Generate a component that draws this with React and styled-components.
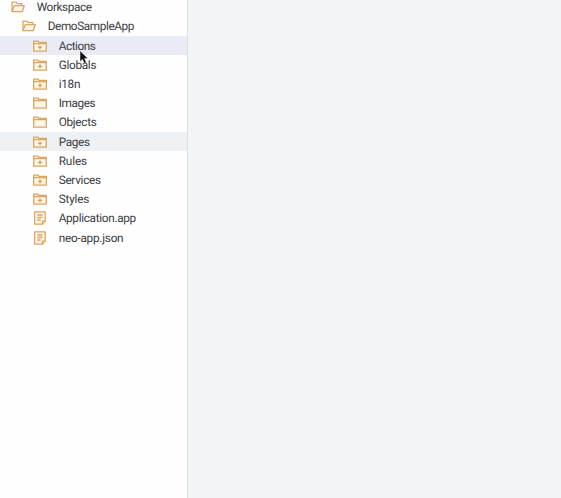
import React from "react";
import styled, { createGlobalStyle } from "styled-components";

const GlobalStyle = createGlobalStyle`
  html, body { margin: 0; height: 100%; overflow: hidden; }
  * { box-sizing: border-box; }
`;
const Shell = styled.div`
  display: flex;
  width: 561px;
  height: 498px;
  background: #f1f5f5;
  font-family: Roboto, "Open Sans", sans-serif;
  text-rendering: geometricPrecision;
`;
const Sidebar = styled.nav`
  position: relative;
  width: 188px;
  height: 100%;
  overflow: hidden;
  background: #fefefe;
  border-right: 1px solid #dbe0e5;
`;
const Canvas = styled.main`
  flex: 1;
`;
const Tree = styled.ul`
  list-style: none;
  margin: -2.3px 0 0;
  padding: 0;
`;
const Row = styled.li`
  display: flex;
  align-items: center;
  height: 19.2px;
  padding-left: ${(p) => p.$indent}px;
  background: ${(p) => p.$fill || "transparent"};
`;
const Icon = styled.svg`
  flex: none;
  width: 14px;
  height: 14px;
  margin-right: 11.7px;
  fill: #fdf5e9;
  stroke: #dba65f;
  stroke-width: 1.3;
  stroke-linejoin: round;
`;
const Label = styled.span`
  font-size: 11.8px;
  line-height: 20px;
  color: #3b3d3f;
  white-space: nowrap;
  letter-spacing: ${(p) => p.$spacing}px;
`;
const Pointer = styled.svg`
  position: absolute;
  left: 79px;
  top: 50px;
  width: 10px;
  height: 14px;
`;

function TreeIcon({ kind }) {
  if (kind === "open")
    return (
      <Icon viewBox="0 0 14 14">
        <path d="M1 11.6V2.2h4l1.1 1.4h4.7v2.1" fill="none" />
        <path d="M1 11.7 3.3 5.7h9.9l-2 6z" />
      </Icon>
    );
  if (kind === "file")
    return (
      <Icon viewBox="0 0 14 14">
        <path d="M1.6 .8h10.6v9.4L9.4 13.2H1.6z" />
        <path d="M9.4 13v-2.8h2.6M4.2 4h5.4M4.2 6.5h5.4M4.2 9h3.5" />
      </Icon>
    );
  return (
    <Icon viewBox="0 0 14 14">
      <path d="M.7 12.2V2.1h4.4l1 1.4h7.2v8.7z" />
      <path d="M.7 4.6h12.6" />
      {kind === "plus" && <path d="M7 6.2v4.2M4.9 8.3h4.2" />}
    </Icon>
  );
}

const items = [
  { name: "Workspace", kind: "open", indent: 11, spacing: -0.4 },
  { name: "DemoSampleApp", kind: "open", indent: 22, spacing: -0.4 },
  { name: "Actions", kind: "plus", fill: "#e9ecf4", spacing: -0.45 },
  { name: "Globals", kind: "plus", spacing: -0.3 },
  { name: "i18n", kind: "plus", spacing: -0.3 },
  { name: "Images", kind: "folder", spacing: -0.4 },
  { name: "Objects", kind: "folder", spacing: -0.3 },
  { name: "Pages", kind: "plus", fill: "#edf1f4", spacing: -0.35 },
  { name: "Rules", kind: "plus", spacing: -0.15 },
  { name: "Services", kind: "plus", spacing: -0.3 },
  { name: "Styles", kind: "plus", spacing: -0.2 },
  { name: "Application.app", kind: "file", spacing: -0.32 },
  { name: "neo-app.json", kind: "file", spacing: -0.25 },
];

export default function App() {
  return (
    <Shell>
      <GlobalStyle />
      <Sidebar>
        <Tree>
          {items.map((item) => (
            <Row key={item.name} $indent={item.indent ?? 33} $fill={item.fill}>
              <TreeIcon kind={item.kind} />
              <Label $spacing={item.spacing}>{item.name}</Label>
            </Row>
          ))}
        </Tree>
        <Pointer viewBox="0 0 10 14">
          <path d="M1 .7v11l2.5-2.2 1.8 4 2.1-.9-1.8-4H9z" fill="#111" stroke="#f4f4f6" strokeWidth=".5" />
        </Pointer>
      </Sidebar>
      <Canvas />
    </Shell>
  );
}
